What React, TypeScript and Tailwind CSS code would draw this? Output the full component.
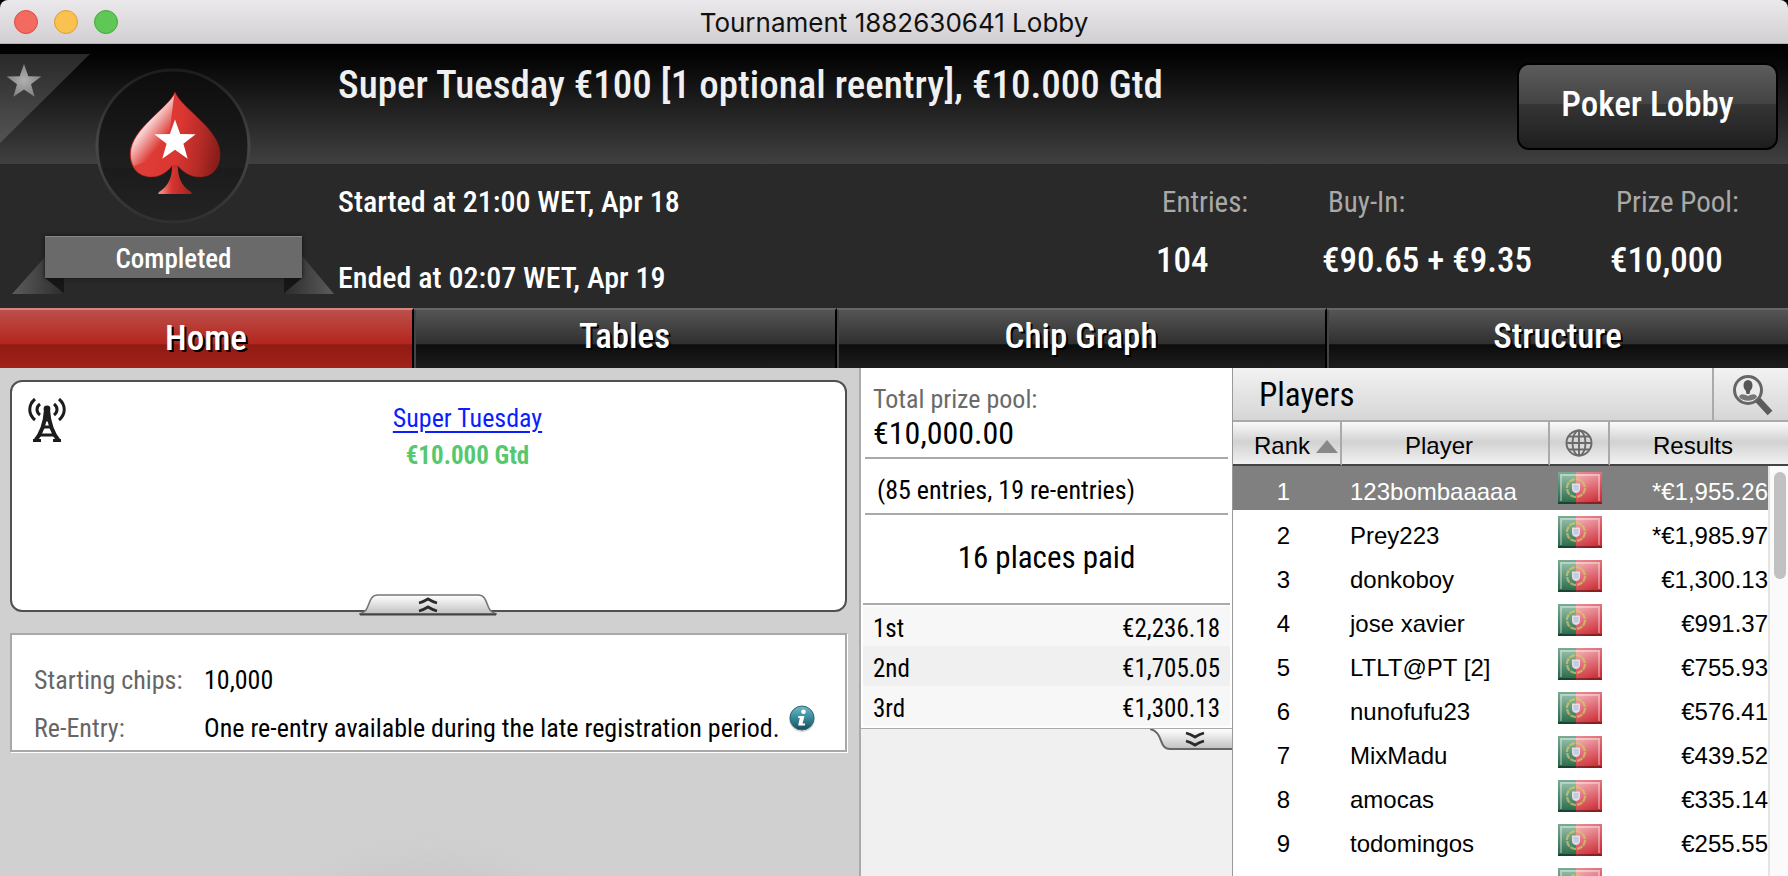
import React from "react";

const tabs = [
  { name: "Home", cell: "grow-[412]" },
  { name: "Tables", cell: "grow-[421]" },
  { name: "Chip Graph", cell: "grow-[488]" },
  { name: "Structure", cell: "grow-[461]" },
];

const payouts = [
  ["1st", "€2,236.18"],
  ["2nd", "€1,705.05"],
  ["3rd", "€1,300.13"],
];

const players = [
  ["1", "123bombaaaaa", "*€1,955.26"],
  ["2", "Prey223", "*€1,985.97"],
  ["3", "donkoboy", "€1,300.13"],
  ["4", "jose xavier", "€991.37"],
  ["5", "LTLT@PT [2]", "€755.93"],
  ["6", "nunofufu23", "€576.41"],
  ["7", "MixMadu", "€439.52"],
  ["8", "amocas", "€335.14"],
  ["9", "todomingos", "€255.55"],
  ["", "", ""],
];

const STAR = "M0 -10 L2.4 -3.2 L9.6 -3.1 L3.9 1.3 L5.9 8.2 L0 4.1 L-5.9 8.2 L-3.9 1.3 L-9.6 -3.1 L-2.4 -3.2 Z";

function CornerStar() {
  return (
    <svg className="absolute left-0 top-2.5" width="90" height="90" viewBox="0 0 90 90" aria-hidden="true">
      <defs>
        <linearGradient id="corner" x1="0" y1="0" x2="0" y2="1">
          <stop offset="0" stopColor="#292929" />
          <stop offset="1" stopColor="#545454" />
        </linearGradient>
        <radialGradient id="cornerStar">
          <stop offset="0" stopColor="#b0b0b0" />
          <stop offset="1" stopColor="#858585" />
        </radialGradient>
      </defs>
      <path d="M0 0H90L0 89Z" fill="url(#corner)" />
      <path d={STAR} transform="translate(24 28) scale(1.8)" fill="url(#cornerStar)" />
    </svg>
  );
}

function SpadeBadge() {
  return (
    <svg className="ml-[93px] mt-5" width="160" height="162" viewBox="0 0 160 162" role="img" aria-label="Spade">
      <defs>
        <linearGradient id="ring" x1="0" y1="0" x2="0" y2="1">
          <stop offset="0" stopColor="#1c1c1c" />
          <stop offset="0.5" stopColor="#484848" />
          <stop offset="1" stopColor="#303030" />
        </linearGradient>
        <linearGradient id="disc" x1="0" y1="0" x2="0" y2="1">
          <stop offset="0" stopColor="#0c0c0c" />
          <stop offset="0.64" stopColor="#1f1f1f" />
          <stop offset="0.65" stopColor="#1b1b1b" />
          <stop offset="1" stopColor="#242424" />
        </linearGradient>
        <linearGradient id="spade" x1="0" y1="0.4" x2="1" y2="0.55">
          <stop offset="0" stopColor="#e0403a" />
          <stop offset="0.55" stopColor="#dc3631" />
          <stop offset="0.8" stopColor="#b52b27" />
          <stop offset="1" stopColor="#8a1d1a" />
        </linearGradient>
        <linearGradient id="stem" x1="0" y1="0" x2="1" y2="0">
          <stop offset="0.1" stopColor="#f08580" />
          <stop offset="0.4" stopColor="#d93530" />
          <stop offset="1" stopColor="#9c2320" />
        </linearGradient>
        <linearGradient id="shine" gradientUnits="userSpaceOnUse" x1="46" y1="66" x2="66" y2="82">
          <stop offset="0" stopColor="#fff" stopOpacity="0.9" />
          <stop offset="1" stopColor="#fff" stopOpacity="0" />
        </linearGradient>
      </defs>
      <circle cx="80" cy="82" r="76" fill="url(#disc)" stroke="url(#ring)" strokeWidth="3" />
      <path
        d="M79 98 C80 112 76 122 66 128 Q64 130 67 130 H97 Q100 130 98 128 C88 122 84 112 85 98 Z"
        fill="url(#stem)"
      />
      <path
        d="M82 28 C76 44 37 65 37 90 C37 104 46 113 58 113 C68 113 74 108 79 102 H85 C90 108 97 113 107 113 C119 113 127 104 127 90 C127 65 88 44 82 28 Z"
        fill="url(#spade)"
        stroke="#8f1f1c"
        strokeOpacity="0.5"
      />
      <path
        d="M82 29 C76 44 38 65 38 90 C38 95 39 99 41 102 L74 90 L81 32 Z"
        fill="url(#shine)"
      />
      <path d={STAR} transform="translate(82 77) scale(2.15)" fill="#fff" />
    </svg>
  );
}

function Ribbon() {
  return (
    <div className="relative ml-3 mt-2.5 h-[62px] w-[322px]">
      <svg className="absolute inset-0" width="322" height="62" viewBox="0 0 322 62" aria-hidden="true">
        <defs>
          <linearGradient id="tailL" x1="0" y1="0" x2="1" y2="0">
            <stop offset="0" stopColor="#5c5c5c" />
            <stop offset="1" stopColor="#2e2e2e" />
          </linearGradient>
          <linearGradient id="tailR" x1="1" y1="0" x2="0" y2="0">
            <stop offset="0" stopColor="#5c5c5c" />
            <stop offset="1" stopColor="#2e2e2e" />
          </linearGradient>
        </defs>
        <path d="M0 58 L34 20 H50 V58 Z" fill="url(#tailL)" />
        <path d="M322 58 L290 20 H274 V58 Z" fill="url(#tailR)" />
        <path d="M33 42 H52 V57 Z" fill="#161616" />
        <path d="M290 42 H272 V57 Z" fill="#161616" />
      </svg>
      <div className="relative ml-[33px] flex h-[42px] w-[257px] items-center justify-center border-t border-[#888] bg-[#6a6a6a] pt-1 text-[27px] font-medium text-white shadow-[0_0_4px_#111]">
        Completed
      </div>
    </div>
  );
}

function Antenna() {
  return (
    <svg className="shrink-0" width="38" height="44" viewBox="0 0 38 44" fill="none" stroke="#1c1c1c" aria-hidden="true">
      <circle cx="19" cy="11" r="3.400" fill="#1c1c1c" stroke="none" />
      <path d="M18 12 C17 26 13 36 7 43 M20 12 C21 26 25 36 31 43" strokeWidth="4" />
      <path d="M16 22H22M14 29H24M11 37H27" strokeWidth="3" />
      <path d="M5 42.500H13M25 42.500H33" strokeWidth="3" />
      <path d="M7 1 C0 7 0 16 7 22 M31 1 C38 7 38 16 31 22" strokeWidth="3" />
      <path d="M12 6 C8 9 8 14 12 17 M26 6 C30 9 30 14 26 17" strokeWidth="3" />
    </svg>
  );
}

function InfoIcon() {
  return (
    <svg className="-mt-1.5 shrink-0" width="28" height="30" viewBox="0 0 28 30" aria-hidden="true">
      <defs>
        <linearGradient id="info" x1="0" y1="0" x2="0" y2="1">
          <stop offset="0" stopColor="#6fb9c8" />
          <stop offset="0.5" stopColor="#38899b" />
          <stop offset="1" stopColor="#174c5c" />
        </linearGradient>
      </defs>
      <circle cx="14" cy="15" r="13" fill="#000" opacity="0.15" />
      <circle cx="14" cy="14" r="12" fill="url(#info)" stroke="#2c6b7a" />
      <circle cx="15.500" cy="7.800" r="2.300" fill="#fff" />
      <path d="M10.500 12H16.500L14.500 19.500H17.200L16.800 21.500H10.200L11.800 14H10Z" fill="#fff" />
    </svg>
  );
}

function Chevrons({ down = false }: { down?: boolean }) {
  return (
    <g fill="none" stroke="#2a2a2a" strokeWidth="2.800" transform={down ? "scale(1 -1)" : undefined}>
      <path d="M-9 -2 Q-5 -3 0 -6 Q5 -3 9 -2" />
      <path d="M-9 6 Q-5 5 0 2 Q5 5 9 6" />
    </g>
  );
}

function TabGradient({ id }: { id: string }) {
  return (
    <linearGradient id={id} x1="0" y1="0" x2="0" y2="1">
      <stop offset="0.1" stopColor="#fafafa" />
      <stop offset="1" stopColor="#c0c0c0" />
    </linearGradient>
  );
}

function PlayerSearch() {
  return (
    <svg width="42" height="42" viewBox="0 0 42 42" aria-hidden="true">
      <circle cx="16" cy="16" r="13.500" fill="#ececec" stroke="#666" strokeWidth="3" />
      <ellipse cx="16" cy="11.500" rx="4.500" ry="5.500" fill="#555" />
      <path d="M13 13H19L17.500 20H14.500Z" fill="#555" />
      <path d="M7 23 C8 19 12 20 16 22 C20 20 24 19 25 23 C21 28 11 28 7 23Z" fill="#777" />
      <path d="M26 26 L38 39" stroke="#5c5c5c" strokeWidth="6.500" />
    </svg>
  );
}

function Globe() {
  return (
    <svg width="28" height="28" viewBox="0 0 28 28" fill="none" stroke="#6a6a6a" strokeWidth="1.900" role="img" aria-label="Country">
      <circle cx="14" cy="14" r="12.500" />
      <ellipse cx="14" cy="14" rx="6.500" ry="12.500" />
      <path d="M14 1.500V26.500M1.500 14H26.500M3.500 7.500H24.500M3.500 20.500H24.500" />
    </svg>
  );
}

function Flag() {
  return (
    <svg className="mx-auto block" width="44" height="32" viewBox="0 0 44 32" role="img" aria-label="Portugal">
      <defs>
        <linearGradient id="green" x1="0" y1="0" x2="0" y2="1">
          <stop offset="0" stopColor="#9cc4b0" />
          <stop offset="1" stopColor="#276747" />
        </linearGradient>
        <linearGradient id="red" x1="0.2" y1="0" x2="0.5" y2="1">
          <stop offset="0" stopColor="#f3b4b9" />
          <stop offset="0.5" stopColor="#e0707a" />
          <stop offset="1" stopColor="#cf3138" />
        </linearGradient>
      </defs>
      <rect width="18" height="32" fill="url(#green)" />
      <rect x="18" width="26" height="32" fill="url(#red)" />
      <circle cx="18" cy="16" r="9" fill="none" stroke="#d3cf62" strokeWidth="2.200" strokeOpacity="0.7" strokeDasharray="6 1" />
      <path d="M14 11.500H22V17Q22 20.500 18 21Q14 20.500 14 17Z" fill="#e6dce2" />
      <path d="M15.500 13H20.500V18.500H15.500Z" fill="#b9cfe3" />
      <path d="M3 29V3H41V29" fill="none" stroke="#fff" strokeOpacity="0.35" strokeWidth="2" />
      <path d="M0 31H44" stroke="#000" strokeOpacity="0.35" strokeWidth="2" />
      <path d="M1 0V30M0 1H18" stroke="#186040" strokeOpacity="0.25" strokeWidth="2" />
      <path d="M18 1H44M43 0V30" stroke="#d02030" strokeOpacity="0.3" strokeWidth="2" />
    </svg>
  );
}

function Stat({ label, value }: { label: string; value: string }) {
  return (
    <div>
      <dt className="pl-1.5 text-[29px] leading-9 text-[#a9a9a9]">{label}</dt>
      <dd className="mt-5 text-[35px] font-medium leading-[42px] text-white">{value}</dd>
    </div>
  );
}

export default function App() {
  return (
    <div className="flex h-screen flex-col overflow-hidden bg-[#d0d0d0] font-['Roboto_Condensed','Roboto',sans-serif] text-black">
      <div className="bg-black">
        <div className="relative flex h-11 items-center justify-center rounded-t-lg border-b border-[#b5b2b5] bg-linear-to-b from-[#ebe9eb] to-[#d1cfd1] font-['Inter',sans-serif]">
          <div className="absolute left-3.5 flex gap-4">
            <button aria-label="Close" className="size-6 rounded-full border border-[#dd4c41] bg-[#f26a60]" />
            <button aria-label="Minimize" className="size-6 rounded-full border border-[#dda038] bg-[#f8c150]" />
            <button aria-label="Zoom" className="size-6 rounded-full border border-[#46a83a] bg-[#5fc755]" />
          </div>
          <h1 className="pt-0.5 text-[26px] leading-none text-[#111]">Tournament 1882630641 Lobby</h1>
        </div>
      </div>

      <header className="relative flex h-[264px] shrink-0 bg-[linear-gradient(to_bottom,#000_0,#040404_14px,#404040_120px,#292929_120px)]">
        <CornerStar />
        <div className="relative w-[338px] shrink-0">
          <SpadeBadge />
          <Ribbon />
        </div>
        <div className="flex grow flex-col">
          <div className="flex h-[120px] justify-between pr-2.5">
            <h2 className="pt-[17px] text-[39px] font-medium leading-12 text-[#f0f0f0]">Super Tuesday €100 [1 optional reentry], €10.000 Gtd</h2>
            <button className="mt-[19px] h-[87px] w-[261px] rounded-xl border-2 border-black bg-[linear-gradient(to_bottom,#5c5c5c_0,#434343_47%,#353535_47%,#1e1e1e_100%)] pb-0.5 text-[35px] font-medium text-white">
              Poker Lobby
            </button>
          </div>
          <div className="flex justify-between pt-5">
            <div className="flex flex-col gap-10 text-[30px] font-medium leading-9 text-white">
              <p>Started at 21:00 WET, Apr 18</p>
              <p>Ended at 02:07 WET, Apr 19</p>
            </div>
            <dl className="grid grid-cols-[166px_288px_178px]">
              <Stat label="Entries:" value="104" />
              <Stat label="Buy-In:" value="€90.65 + €9.35" />
              <Stat label="Prize Pool:" value="€10,000" />
            </dl>
          </div>
        </div>
      </header>

      <nav className="flex h-15 shrink-0">
        {tabs.map((t, i) => (
          <button
            key={t.name}
            className={`basis-0 border-t-2 border-r-2 border-r-black text-[35px] font-medium leading-none text-white last:border-r-0 [text-shadow:2px_2px_0_#000] ${t.cell} ${
              i === 0
                ? "border-t-[#d88480] bg-[linear-gradient(to_bottom,#bd4f4b_0,#b3261d_58%,#8f1b14_60%,#a32119_100%)] pb-0.5"
                : "border-t-[#666] bg-[linear-gradient(to_bottom,#555_0,#303030_58%,#0c0c0c_60%,#1e1e1e_100%)] pb-1.5 shadow-[inset_2px_0_0_#444]"
            }`}
          >
            {t.name}
          </button>
        ))}
      </nav>

      <main className="grid min-h-0 grow grid-cols-[861fr_372fr_555fr]">
        <section className="relative overflow-hidden border-r-2 border-[#aaa] pl-2.5 pr-3 pt-3">
          <div className="relative flex h-[232px] rounded-xl border-2 border-[#505050] bg-white pl-4 pt-4">
            <Antenna />
            <div className="grow pl-6 pt-px text-center text-[26px] leading-[38px]">
              <a href="#super-tuesday" className="text-[#0a1eff] underline underline-offset-4">Super Tuesday</a>
              <p className="text-[25px] font-bold text-[#56c870]">€10.000 Gtd</p>
            </div>
            <button aria-label="Collapse" className="absolute -bottom-1.5 left-[346px]">
              <svg className="block" width="140" height="22" viewBox="0 0 140 22">
                <defs><TabGradient id="handleUp" /></defs>
                <path d="M1 20 C14 18 8 1 20 1 H120 C132 1 126 18 139 20 Z" fill="url(#handleUp)" stroke="#777" strokeWidth="1.600" />
                <path d="M2 20.500H138" stroke="#444" strokeWidth="2" />
                <g transform="translate(70 11)"><Chevrons /></g>
              </svg>
            </button>
          </div>
          <dl className="mt-[21px] grid h-[119px] grid-cols-[170px_1fr] content-start gap-y-3 border-2 border-[#a8a8a8] bg-white pl-[22px] pt-[27px] text-[26px] leading-9 shadow-[1px_1px_0_#fff]">
            <dt className="text-[#666]">Starting chips:</dt>
            <dd>10,000</dd>
            <dt className="text-[#666]">Re-Entry:</dt>
            <dd className="flex gap-2 whitespace-nowrap">
              One re-entry available during the late registration period.
              <InfoIcon />
            </dd>
          </dl>
          <div className="absolute -bottom-[84px] left-1/2 h-24 w-56 -translate-x-1/2 rounded-[50%] bg-[#c9c9c9] blur-lg" />
        </section>

        <section className="flex flex-col border-r border-[#999] bg-[#f0f0f0]">
          <div className="bg-white">
            <div className="mx-1 border-b-2 border-[#aaa] pb-[3px] pl-2 pt-[17px]">
              <p className="text-[26px] leading-7 text-[#6a6a6a]">Total prize pool:</p>
              <p className="text-[32px] leading-[41px]">€10,000.00</p>
            </div>
            <p className="mx-1 border-b-2 border-[#aaa] pb-1 pl-3 pt-3 text-[26px] leading-[38px]">(85 entries, 19 re-entries)</p>
            <p className="mx-0.5 border-b-2 border-[#aaa] pb-[25px] pt-[23px] text-center text-[31px] leading-10">16 places paid</p>
          </div>
          <div className="border-b border-[#aaa] bg-white px-0.5 pb-0.5 pt-px">
            <table className="w-full text-[25px] leading-[34px]">
              <tbody>
                {payouts.map(([place, prize]) => (
                  <tr key={place} className="odd:bg-[#f7f7f7] even:bg-[#f0f0f0]">
                    <th scope="row" className="p-0 pl-2.5 pt-1.5 text-left font-normal">{place}</th>
                    <td className="p-0 pr-2.5 pt-1.5 text-right">{prize}</td>
                  </tr>
                ))}
              </tbody>
            </table>
          </div>
          <button aria-label="Show more" className="self-end">
            <svg className="block" width="82" height="22" viewBox="0 0 82 22">
              <defs><TabGradient id="handleDown" /></defs>
              <path d="M0 0 C14 3 8 20 20 20 H82 V0 Z" fill="url(#handleDown)" />
              <path d="M0 0 C14 3 8 20 20 20 H82" fill="none" stroke="#666" strokeWidth="2" />
              <g transform="translate(45 10)"><Chevrons down /></g>
            </svg>
          </button>
        </section>

        <section className="flex min-h-0 flex-col overflow-hidden bg-white">
          <div className="flex h-[54px] shrink-0 border-b-2 border-[#aaa] bg-linear-to-b from-[#f2f2f2] to-[#d6d6d6]">
            <h2 className="grow pl-[26px] text-[33px] leading-[54px]">Players</h2>
            <button aria-label="Find a player" className="flex w-[76px] items-center justify-center border-l-2 border-[#aaa] pl-1 pt-0.5">
              <PlayerSearch />
            </button>
          </div>
          <table className="w-full table-fixed border-separate border-spacing-0 font-['Liberation_Sans',Arial,sans-serif] text-[24px]">
            <colgroup>
              <col className="w-[109px]" />
              <col className="w-[208px]" />
              <col className="w-[60px]" />
              <col />
              <col className="w-5" />
            </colgroup>
            <thead>
              <tr className="h-11 bg-[linear-gradient(to_bottom,#fafafa_0,#d2d2d2_45%,#f4f4f4_100%)] *:border-b-2 *:border-b-[#444] *:border-r-2 *:border-r-[#aaa] *:p-0 *:pt-1.5 *:font-normal">
                <th scope="col">
                  <span className="flex items-center justify-end gap-1.5 pr-0.5">
                    Rank
                    <svg width="22" height="13" viewBox="0 0 22 13" aria-hidden="true"><path d="M11 0L22 13H0Z" fill="#888" /></svg>
                  </span>
                </th>
                <th scope="col"><span className="pr-3">Player</span></th>
                <th scope="col"><span className="flex justify-center pb-1.5"><Globe /></span></th>
                <th scope="col" colSpan={2} className="border-r-0!"><span className="pr-3">Results</span></th>
              </tr>
            </thead>
            <tbody>
              {players.map(([rank, name, result], i) => (
                <tr key={i} className="h-11 *:p-0 first:text-white first:*:bg-[#808080]">
                  <td><span className="block pr-2 pt-2 text-center">{rank}</span></td>
                  <td><span className="block pl-2 pt-2">{name}</span></td>
                  <td className="align-top"><span className="block pt-1.5"><Flag /></span></td>
                  <td><span className="block pt-2 text-right">{result}</span></td>
                  {i === 0 && (
                    <td rowSpan={players.length} className="border-l-2 border-[#e5e5e5] bg-[#fafafa]! align-top">
                      <div className="ml-1 mt-1.5 h-[107px] w-3 rounded-full bg-[#c1c1c1]" />
                    </td>
                  )}
                </tr>
              ))}
            </tbody>
          </table>
        </section>
      </main>
    </div>
  );
}
